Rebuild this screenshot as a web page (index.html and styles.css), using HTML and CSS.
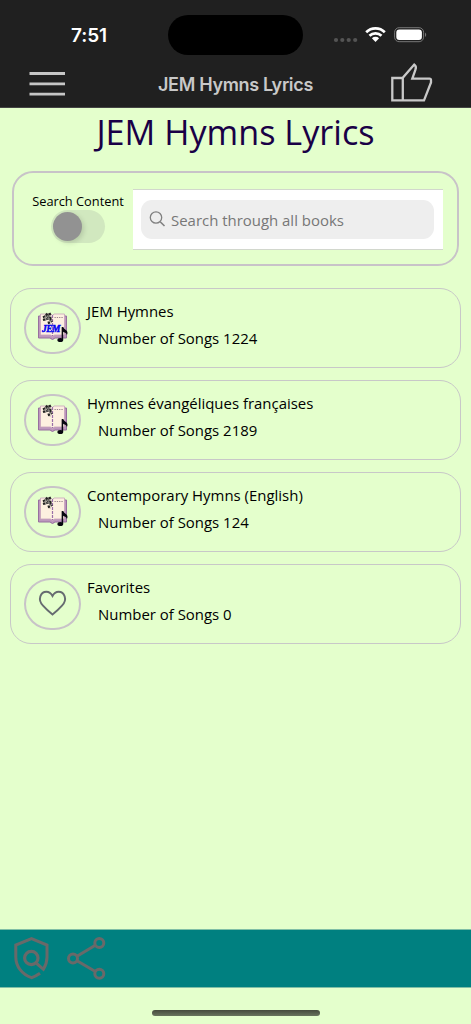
FILE: index.html
```html
<!DOCTYPE html>
<html lang="en">
<head>
<meta charset="utf-8">
<title>JEM Hymns Lyrics</title>
<link rel="stylesheet" href="styles.css">
</head>
<body>
<svg class="defs" width="0" height="0">
  <defs>
    <g id="book">
      <path d="M1.500 4h28v22H18q-2.500 3-5 0H1.500z" fill="#bd98bd" stroke="#97709f" stroke-width="1"/>
      <path d="M3.500 2h10.500l1.500 1.500L17 2h10.500V23H17.500l-2 1.500-2-1.500h-10z" fill="#fdf0e0" stroke="#c7a2bb" stroke-width=".8"/>
      <path d="M15.500 3v21" stroke="#9a70a8" stroke-width="1.200" stroke-dasharray="3 1"/>
      <path d="M17.500 5.500h8.500" stroke="#9a8790" stroke-width="1.200" stroke-dasharray="1.300 1"/>
      <path d="M6 5.500l8-4M6 8l9-2.500M9 1.500l6 8.500M11.500 9.500l1 3" stroke="#222" stroke-width="2.300" stroke-dasharray="2.600 .5"/>
      <path d="M7 5.500l7-2M10 3l4 7M8 7.500l5-1.500" stroke="#8c8c88" stroke-width=".8"/>
    </g>
    <g id="note">
      <ellipse cx="23.300" cy="28" rx="2.900" ry="2.100" fill="#080810"/>
      <path d="M25.400 28V15.500" stroke="#080810" stroke-width="1.500"/>
      <path d="M24.700 15h1.500q.600 1.800 3 3.300 2.200 2.200.700 4.700-.400-2.500-3.700-3z" fill="#080810"/>
    </g>
  </defs>
</svg>
<div class="screen">
  <header class="top">
    <div class="status">
      <span class="time">7:51</span>
      <span class="island"></span>
      <span class="signals">
        <svg width="94" height="18" viewBox="0 0 94 18">
          <g fill="#545454"><circle cx="3" cy="14" r="2.100"/><circle cx="9.300" cy="14" r="2.100"/><circle cx="15.700" cy="14" r="2.100"/><circle cx="22.200" cy="14" r="2.100"/></g>
          <g fill="none" stroke="#fff" stroke-width="2.700"><path d="M33.200 6.300a13.200 13.200 0 0 1 18.600 0"/><path d="M36.500 9.800a8.500 8.500 0 0 1 12 0"/></g>
          <path d="M38.900 12.300a5.200 5.200 0 0 1 7.200 0L42.500 16z" fill="#fff"/>
          <rect x="61.600" y="1.700" width="29" height="14" rx="4.500" fill="none" stroke="#777"/>
          <rect x="63.300" y="3.400" width="25.600" height="10.600" rx="3" fill="#fff"/>
          <path d="M92 6.500q2.400 2 0 4.500z" fill="#777"/>
        </svg>
      </span>
    </div>
    <nav class="nav">
      <svg class="menu" width="36" height="26" viewBox="0 0 36 26"><path d="M.500 2.500h35.500M.500 12.900h35.500M.500 23.200h35.500" stroke="#c6c6c6" stroke-width="2.800"/></svg>
      <span class="nav-title">JEM Hymns Lyrics</span>
      <svg class="like" width="42" height="42" viewBox="0 0 42 42" fill="none" stroke="#c8c8c8" stroke-width="2.300"><path d="M1.300 16H11.500L23.300 2.600q2.500 1.800 1.100 5.300L21.300 16.600H38.500q1.600 0 1.500 1.700v2.200L33 38.400H1.300zM11.800 16v22"/></svg>
    </nav>
  </header>
  <main class="content">
    <h1 class="title">JEM Hymns Lyrics</h1>
    <section class="search">
      <div class="toggle">
        <span class="toggle-label">Search Content</span>
        <span class="switch"><span class="knob"></span></span>
      </div>
      <div class="search-bar">
        <div class="field">
          <svg width="17" height="17" viewBox="0 0 17 17" fill="none" stroke="#808080" stroke-width="1.300"><circle cx="7" cy="6.500" r="5.700"/><path d="M11.200 10.700l4.300 4.300" stroke-width="1.600"/></svg>
          <span class="placeholder">Search through all books</span>
        </div>
      </div>
    </section>
    <section class="books">
      <article class="card">
        <div class="badge"><svg width="32" height="32" viewBox="0 0 32 32"><use href="#book"/><text class="jem" x="5" y="20" textLength="18.500">JEM</text><use href="#note"/></svg></div>
        <div class="info"><div>JEM Hymnes</div><div class="count">Number of Songs 1224</div></div>
      </article>
      <article class="card">
        <div class="badge"><svg width="32" height="32" viewBox="0 0 32 32"><use href="#book"/><use href="#note"/></svg></div>
        <div class="info"><div>Hymnes évangéliques françaises</div><div class="count">Number of Songs 2189</div></div>
      </article>
      <article class="card">
        <div class="badge"><svg width="32" height="32" viewBox="0 0 32 32"><use href="#book"/><use href="#note"/></svg></div>
        <div class="info"><div>Contemporary Hymns (English)</div><div class="count">Number of Songs 124</div></div>
      </article>
      <article class="card">
        <div class="badge"><svg width="32" height="32" viewBox="0 0 32 32" fill="none" stroke="#666b70" stroke-width="1.900"><path d="M15.500 26.500Q9.800 22 6 17.700C0 11.300 3.800 3.800 9.400 3.800c2.900 0 4.700 1.500 6.100 4.200 1.400-2.700 3.200-4.200 6.100-4.200 5.600 0 9.400 7.500 3.400 13.900Q21.200 22 15.500 26.500z"/></svg></div>
        <div class="info"><div>Favorites</div><div class="count">Number of Songs 0</div></div>
      </article>
    </section>
  </main>
  <footer class="toolbar">
    <svg width="36" height="44" viewBox="0 0 36 44" fill="none" stroke="#696969" stroke-width="3"><path d="M26 37.300Q21.500 40.500 17.500 41.700C8 38.500 1.800 30.500 1.800 21V9L17.500 2.700 33 9v12.300q0 6-3.600 12L21.500 26.500"/><circle cx="17.300" cy="22" r="6.700" stroke-width="3.200"/></svg>
    <svg width="40" height="44" viewBox="0 0 40 44" fill="none" stroke="#696969" stroke-width="3"><circle cx="6" cy="22.500" r="4.500"/><circle cx="32.300" cy="7" r="4.500"/><circle cx="32.300" cy="37.700" r="4.500"/><path d="M10 20.200L28.300 9.300M10 24.800l18.300 10.700"/></svg>
  </footer>
  <div class="home"><span class="home-bar"></span></div>
</div>
</body>
</html>
```
FILE: styles.css
```css
* { box-sizing: border-box; }
body { margin: 0; background: #e4ffcc; font-family: "Open Sans", sans-serif; color: #000; }
.defs { display: block; }
.screen { width: 471px; height: 1024px; display: flex; flex-direction: column; }
svg { display: block; flex: none; }

.top { height: 108px; background: #202020; border-bottom: 1px solid #444; font-family: Inter, sans-serif; }
.status { height: 62px; padding-top: 15px; display: grid; grid-template-columns: 168px 135px 168px; }
.time { color: #fff; font-size: 19px; font-weight: 600; line-height: 41px; padding-left: 71px; letter-spacing: -.1px; }
.island { height: 40px; border-radius: 20px; background: #000; }
.signals { padding: 11px 0 0 30px; }
.nav { height: 45px; display: grid; grid-template-columns: 129px 1fr 129px; }
.menu { margin: 9px 0 0 29px; }
.nav-title { text-align: center; color: #c8c8c8; font-size: 18px; font-weight: 600; line-height: 45px; letter-spacing: -.33px; white-space: nowrap; }
.like { margin: 0 0 0 49px; }

.content { flex: 1; }
.title { margin: 0; height: 63px; line-height: 48px; text-align: center; font-size: 34.200px; font-weight: 400; color: #190046; white-space: nowrap; }
.search { margin: 0 12px; height: 95px; border: 2px solid #c8c3c8; border-radius: 21px; display: flex; padding: 16px 14px 0 13px; }
.toggle { width: 102px; margin-right: 4px; display: flex; flex-direction: column; align-items: center; }
.toggle-label { font-size: 12.800px; line-height: 18px; margin-top: 3px; white-space: nowrap; }
.switch { width: 54px; height: 33px; border-radius: 17px; background: #d1e8bf; padding: 2px 0 0 2px; }
.knob { display: block; width: 29px; height: 29px; border-radius: 50%; background: #929292; box-shadow: 2px 2px 5px #0002; }
.search-bar { flex: 1; height: 61px; background: #fff; border: solid #d2d7cd; border-width: 1px 0; padding: 10px 9px 0 8px; }
.field { height: 39px; background: #eee; border-radius: 11px; display: flex; align-items: center; gap: 5px; padding-left: 8px; }
.placeholder { font-size: 14.950px; color: #777; line-height: 38px; white-space: nowrap; }

.books { padding: 22px 10px 0; display: flex; flex-direction: column; gap: 12px; }
.card { height: 80px; border: 1px solid #c8c8c8; border-radius: 21px; display: flex; padding: 13px 0 0 13px; }
.badge { width: 57px; height: 52px; border: 2px solid #c8c3c8; border-radius: 27px / 26px; display: flex; align-items: center; justify-content: center; }
.jem { font: italic 700 9.500px "Liberation Serif", serif; fill: #0000f0; stroke: #0000f0; stroke-width: .4px; }
.info { padding-left: 6px; font-size: 14.950px; line-height: 27px; margin-top: -4px; white-space: nowrap; }
.count { padding-left: 11px; }

.toolbar { height: 59px; background: #008080; border: solid #80bfa6; border-width: 1px 0; display: flex; gap: 17px; padding: 6px 0 0 14px; }
.home { height: 36px; display: flex; justify-content: center; padding-top: 22px; }
.home-bar { width: 168px; height: 6px; border-radius: 3px; background: linear-gradient(#454b3d, #68745d); }
```
